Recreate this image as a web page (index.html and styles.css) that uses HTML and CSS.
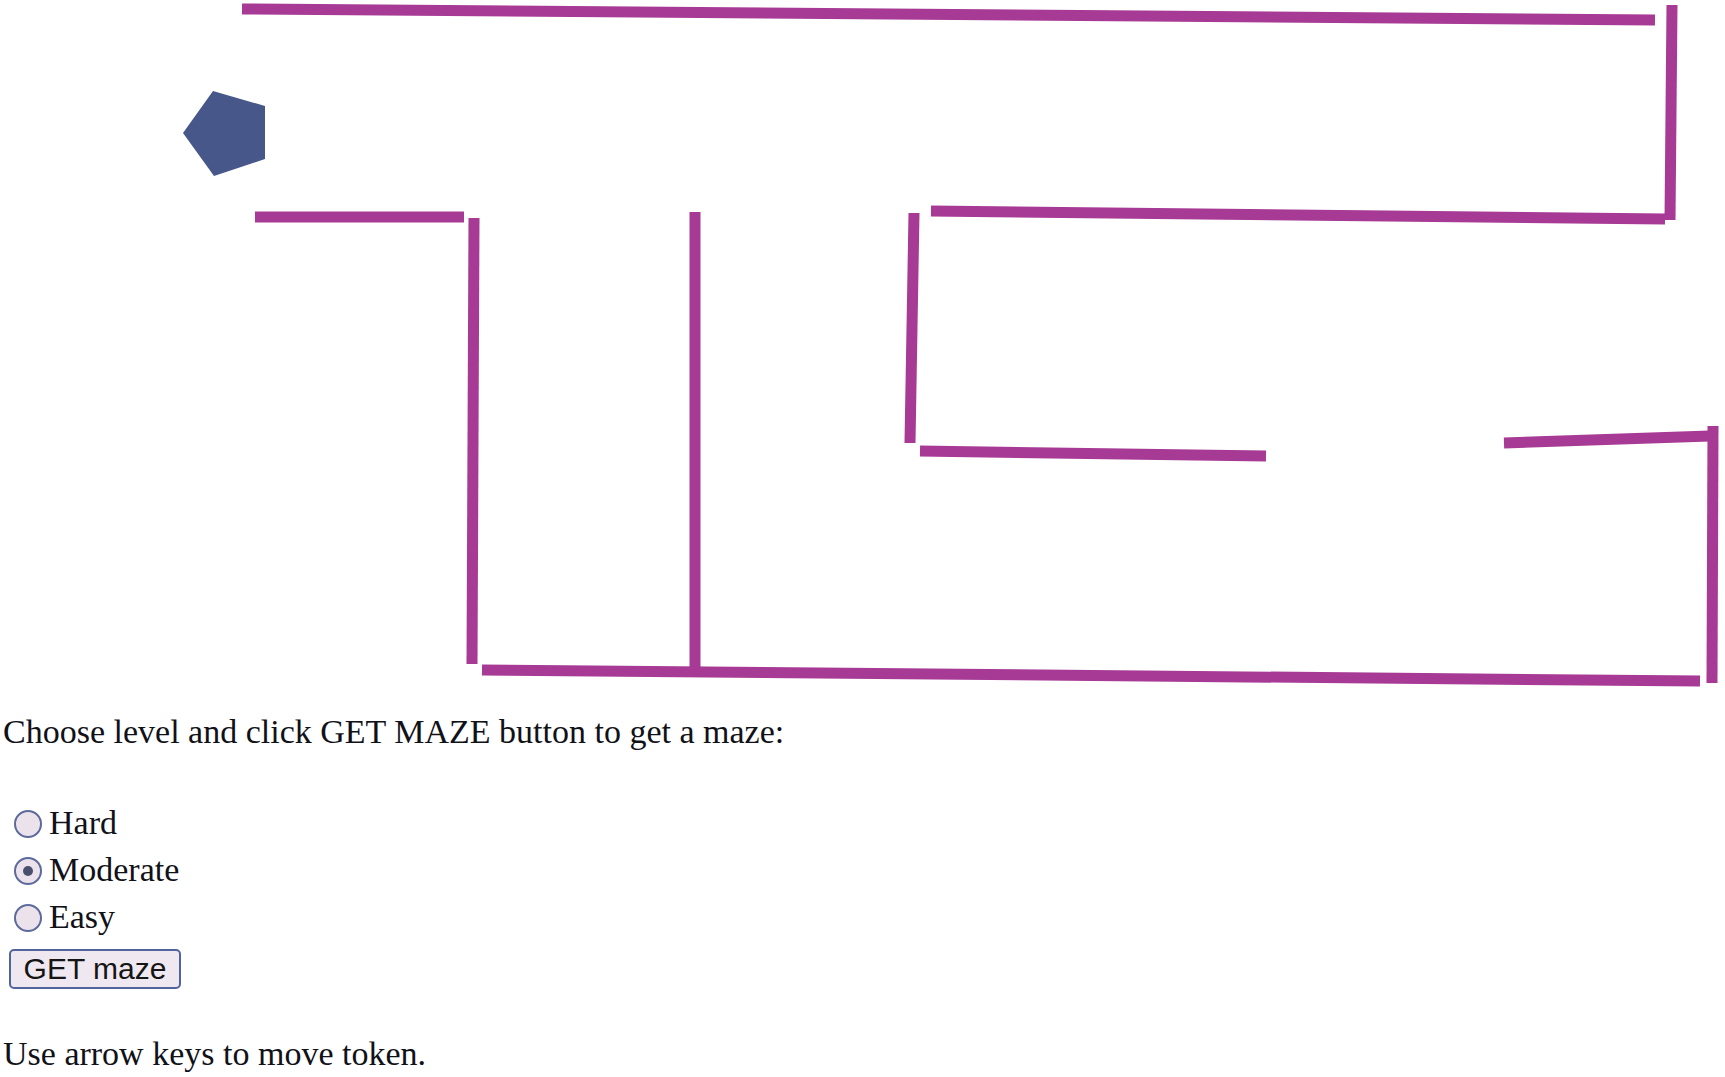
FILE: index.html
```html
<!DOCTYPE html>
<html>
<head>
<meta charset="utf-8">
<title>Maze</title>
<link rel="stylesheet" href="styles.css">
</head>
<body>
<svg class="maze" width="1725" height="712" viewBox="0 0 1725 712">
  <g class="walls">
    <line x1="242" y1="9" x2="1655" y2="20"/>
    <line x1="1672" y1="5" x2="1670" y2="220"/>
    <line x1="931" y1="211" x2="1665" y2="219"/>
    <line x1="255" y1="217" x2="464" y2="217"/>
    <line x1="474" y1="218" x2="472" y2="664"/>
    <line x1="695" y1="212" x2="695" y2="667"/>
    <line x1="914" y1="213" x2="910" y2="443"/>
    <line x1="920" y1="451" x2="1266" y2="456"/>
    <line x1="1504" y1="443" x2="1710" y2="436"/>
    <line x1="1713" y1="426" x2="1712" y2="683"/>
    <line x1="482" y1="670" x2="1700" y2="681"/>
  </g>
  <polygon class="token" points="213,91 265,106 265,159 214,176 183,133"/>
</svg>
<p class="intro">Choose level and click GET MAZE button to get a maze:</p>
<form class="levels">
  <label class="opt"><input type="radio" name="level" value="hard"><span>Hard</span></label>
  <label class="opt"><input type="radio" name="level" value="moderate" checked><span>Moderate</span></label>
  <label class="opt"><input type="radio" name="level" value="easy"><span>Easy</span></label>
  <button type="button" class="get">GET maze</button>
</form>
<p class="hint">Use arrow keys to move token.</p>
</body>
</html>
```
FILE: styles.css
```css
html, body {
  margin: 0;
  padding: 0;
  background: #ffffff;
}
body {
  font-family: "Liberation Serif", "DejaVu Serif", serif;
  font-size: 34px;
  color: #111118;
  padding-left: 3px;
}
.maze {
  display: block;
  margin-left: -3px;
}
.walls line {
  stroke: #a63a94;
  stroke-width: 11;
  stroke-linecap: butt;
}
.token {
  fill: #475789;
}
.intro {
  margin: 0;
  line-height: 40px;
}
.levels {
  margin: 47px 0 0 0;
  display: flex;
  flex-direction: column;
  align-items: flex-start;
}
.opt {
  display: flex;
  align-items: center;
  height: 47px;
  line-height: 47px;
}
.opt input {
  appearance: none;
  -webkit-appearance: none;
  margin: 0 7px 0 11px;
  width: 28px;
  height: 28px;
  border: 2px solid #5d6a9c;
  border-radius: 50%;
  background: #ece2ec;
  box-sizing: border-box;
  position: relative;
  top: 1px;
}
.opt input:checked::after {
  content: "";
  position: absolute;
  left: 7px;
  top: 7px;
  width: 10px;
  height: 10px;
  border-radius: 50%;
  background: #4a4f6e;
}
.get {
  margin: 9px 0 0 6px;
  height: 40px;
  width: 172px;
  padding: 0;
  font-family: "Liberation Sans", Arial, sans-serif;
  font-size: 30px;
  color: #151515;
  background: #efe8f1;
  border: 2px solid #53639c;
  border-radius: 5px;
}
.hint {
  margin: 45px 0 0 0;
  line-height: 40px;
}
```
